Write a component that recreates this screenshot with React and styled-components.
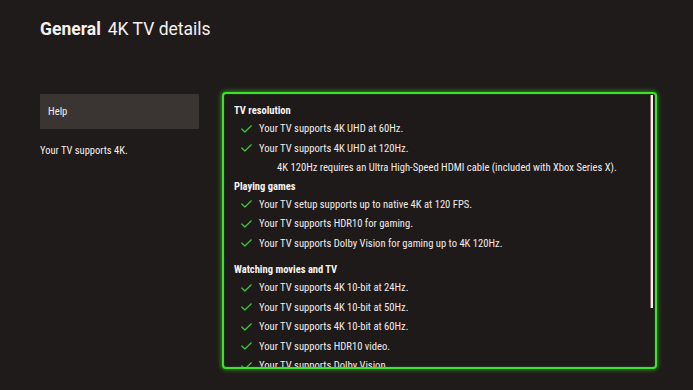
import React from "react";
import styled, { createGlobalStyle } from "styled-components";

const GlobalStyle = createGlobalStyle`
  html, body {
    margin: 0;
    padding: 0;
    background: #1f1b1a;
  }
  body {
    font-family: Roboto, "Open Sans", sans-serif;
    font-stretch: condensed;
    color: #f3eaea;
    -webkit-font-smoothing: antialiased;
  }
`;

const Page = styled.div`
  width: 693px;
  height: 390px;
  overflow: hidden;
  box-sizing: border-box;
  padding: 17px 0 0 40px;
`;

const Title = styled.h1`
  margin: 0;
  font-size: 17.5px;
  line-height: 24px;
  font-weight: 400;
  font-stretch: normal;
  color: #f6f1f0;
  display: flex;
  align-items: baseline;
  gap: 7px;
`;

const TitleStrong = styled.span`
  font-weight: 700;
`;

const Main = styled.div`
  display: flex;
  align-items: flex-start;
  margin-top: 51px;
`;

const Sidebar = styled.div`
  width: 159px;
  padding-top: 2px;
  display: flex;
  flex-direction: column;
`;

const HelpButton = styled.div`
  height: 35px;
  background: #3a3432;
  border-radius: 1px;
  display: flex;
  align-items: center;
  padding-left: 8px;
  font-size: 10.7px;
  color: #f5eeee;
`;

const SideText = styled.div`
  margin-top: 12px;
  font-size: 10.5px;
  line-height: 19px;
  color: #f5eeee;
`;

const Panel = styled.div`
  position: relative;
  margin-left: 23px;
  width: 435px;
  height: 277px;
  box-sizing: border-box;
  border: 2px solid #41e02c;
  border-radius: 4px;
  box-shadow: 0 0 4px 1px rgba(60, 220, 40, 0.55), inset 0 0 2px rgba(60, 220, 40, 0.4);
  background: #1d1a19;
  overflow: hidden;
`;

const Content = styled.div`
  padding: 8px 0 0 10px;
`;

const Section = styled.div`
  margin-top: ${(p) => p.$gap || 0}px;
`;

const Heading = styled.div`
  font-size: 10.5px;
  line-height: 17px;
  font-weight: 700;
  color: #f8f3f2;
`;

const Row = styled.div`
  display: flex;
  align-items: center;
  height: 19.5px;
  padding-left: ${(p) => (p.$note ? 43 : 7)}px;
  gap: 7px;
  font-size: 10.6px;
  white-space: nowrap;
`;

const CheckIcon = styled.svg`
  flex: none;
  width: 11px;
  height: 8px;
`;

const ScrollThumb = styled.div`
  position: absolute;
  right: 2px;
  top: 1px;
  width: 2px;
  height: 213px;
  background: #f4eeee;
  box-shadow: -1px 0 0 rgba(200, 150, 160, 0.6);
`;

const Check = () => (
  <CheckIcon viewBox="0 0 11 8">
    <polyline
      points="0.8,4 3.9,7 10.3,0.8"
      fill="none"
      stroke="#3fc83a"
      strokeWidth="1.2"
      strokeLinecap="round"
      strokeLinejoin="round"
    />
  </CheckIcon>
);

const sections = [
  {
    title: "TV resolution",
    gap: 0,
    items: [
      { text: "Your TV supports 4K UHD at 60Hz." },
      { text: "Your TV supports 4K UHD at 120Hz." },
      {
        text: "4K 120Hz requires an Ultra High-Speed HDMI cable (included with Xbox Series X).",
        note: true,
      },
    ],
  },
  {
    title: "Playing games",
    gap: 0,
    items: [
      { text: "Your TV setup supports up to native 4K at 120 FPS." },
      { text: "Your TV supports HDR10 for gaming." },
      { text: "Your TV supports Dolby Vision for gaming up to 4K 120Hz." },
    ],
  },
  {
    title: "Watching movies and TV",
    gap: 8,
    items: [
      { text: "Your TV supports 4K 10-bit at 24Hz." },
      { text: "Your TV supports 4K 10-bit at 50Hz." },
      { text: "Your TV supports 4K 10-bit at 60Hz." },
      { text: "Your TV supports HDR10 video." },
      { text: "Your TV supports Dolby Vision." },
    ],
  },
];

export default function App() {
  return (
    <>
      <GlobalStyle />
      <Page>
        <Title>
          <TitleStrong>General</TitleStrong>
          <span>4K TV details</span>
        </Title>
        <Main>
          <Sidebar>
            <HelpButton>Help</HelpButton>
            <SideText>Your TV supports 4K.</SideText>
          </Sidebar>
          <Panel>
            <Content>
              {sections.map((s) => (
                <Section key={s.title} $gap={s.gap}>
                  <Heading>{s.title}</Heading>
                  {s.items.map((it) => (
                    <Row key={it.text} $note={it.note}>
                      {!it.note && <Check />}
                      <span>{it.text}</span>
                    </Row>
                  ))}
                </Section>
              ))}
            </Content>
            <ScrollThumb />
          </Panel>
        </Main>
      </Page>
    </>
  );
}
